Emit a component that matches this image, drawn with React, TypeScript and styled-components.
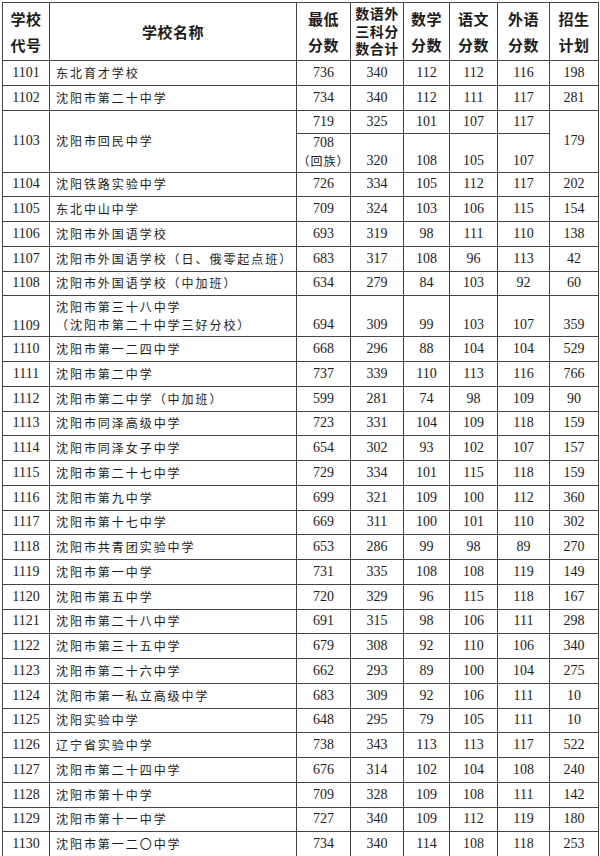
import styled, { createGlobalStyle } from "styled-components";

interface School {
	code: string;
	name: string[];
	min: string;
	total: string;
	math: string;
	chinese: string;
	english: string;
	plan: string;
}

const GlobalStyle = createGlobalStyle`
	html, body {
		margin: 0;
		padding: 0;
		background: #fff;
	}
`;

const Page = styled.div`
	padding: 2px 0 0 2px;
	width: 600px;
	height: 856px;
	overflow: hidden;
	box-sizing: border-box;
`;

const Table = styled.table`
	border-collapse: collapse;
	table-layout: fixed;
	width: 596px;
	color: #1c1c1c;
	font-family: "Liberation Serif", "Noto Sans CJK SC", serif;
	font-size: 14px;

	td, th {
		border: 1px solid #454545;
		padding: 0;
		overflow: hidden;
		white-space: nowrap;
	}
`;

const HeadRow = styled.tr`
	height: 58px;
`;

const Row = styled.tr<{ $h?: number }>`
	height: ${(p) => p.$h ?? 24.75}px;
`;

const Head = styled.th<{ $lines?: number }>`
	font-family: "Noto Sans CJK SC", sans-serif;
	font-weight: 700;
	font-size: ${(p) => ((p.$lines ?? 2) > 2 ? 14 : 15)}px;
	line-height: ${(p) => ((p.$lines ?? 2) > 2 ? 17.5 : 26)}px;
	text-align: center;
	vertical-align: middle;
	letter-spacing: 0.5px;
`;

const HeadLine = styled.span`
	display: block;
`;

const Code = styled.td<{ $bottom?: boolean }>`
	text-align: center;
	vertical-align: ${(p) => (p.$bottom ? "bottom" : "middle")};
	padding-bottom: ${(p) => (p.$bottom ? "2px" : "0")} !important;
`;

const Name = styled.td`
	font-family: "Noto Sans CJK SC", sans-serif;
	font-size: 12px;
	letter-spacing: 1.95px;
	line-height: 18px;
	padding-left: 6px !important;
	text-align: left;
	vertical-align: middle;
`;

const Num = styled.td<{ $bottom?: boolean }>`
	text-align: center;
	line-height: 18px;
	vertical-align: ${(p) => (p.$bottom ? "bottom" : "middle")};
	padding-bottom: ${(p) => (p.$bottom ? "2px" : "0")} !important;
`;

const Note = styled.span`
	display: block;
	font-family: "Noto Sans CJK SC", sans-serif;
	font-size: 12px;
	letter-spacing: 1px;
`;

const schools: School[] = [
	{ code: "1101", name: ["东北育才学校"], min: "736", total: "340", math: "112", chinese: "112", english: "116", plan: "198" },
	{ code: "1102", name: ["沈阳市第二十中学"], min: "734", total: "340", math: "112", chinese: "111", english: "117", plan: "281" },
	{ code: "1104", name: ["沈阳铁路实验中学"], min: "726", total: "334", math: "105", chinese: "112", english: "117", plan: "202" },
	{ code: "1105", name: ["东北中山中学"], min: "709", total: "324", math: "103", chinese: "106", english: "115", plan: "154" },
	{ code: "1106", name: ["沈阳市外国语学校"], min: "693", total: "319", math: "98", chinese: "111", english: "110", plan: "138" },
	{ code: "1107", name: ["沈阳市外国语学校（日、俄零起点班）"], min: "683", total: "317", math: "108", chinese: "96", english: "113", plan: "42" },
	{ code: "1108", name: ["沈阳市外国语学校（中加班）"], min: "634", total: "279", math: "84", chinese: "103", english: "92", plan: "60" },
	{ code: "1109", name: ["沈阳市第三十八中学", "（沈阳市第二十中学三好分校）"], min: "694", total: "309", math: "99", chinese: "103", english: "107", plan: "359" },
	{ code: "1110", name: ["沈阳市第一二四中学"], min: "668", total: "296", math: "88", chinese: "104", english: "104", plan: "529" },
	{ code: "1111", name: ["沈阳市第二中学"], min: "737", total: "339", math: "110", chinese: "113", english: "116", plan: "766" },
	{ code: "1112", name: ["沈阳市第二中学（中加班）"], min: "599", total: "281", math: "74", chinese: "98", english: "109", plan: "90" },
	{ code: "1113", name: ["沈阳市同泽高级中学"], min: "723", total: "331", math: "104", chinese: "109", english: "118", plan: "159" },
	{ code: "1114", name: ["沈阳市同泽女子中学"], min: "654", total: "302", math: "93", chinese: "102", english: "107", plan: "157" },
	{ code: "1115", name: ["沈阳市第二十七中学"], min: "729", total: "334", math: "101", chinese: "115", english: "118", plan: "159" },
	{ code: "1116", name: ["沈阳市第九中学"], min: "699", total: "321", math: "109", chinese: "100", english: "112", plan: "360" },
	{ code: "1117", name: ["沈阳市第十七中学"], min: "669", total: "311", math: "100", chinese: "101", english: "110", plan: "302" },
	{ code: "1118", name: ["沈阳市共青团实验中学"], min: "653", total: "286", math: "99", chinese: "98", english: "89", plan: "270" },
	{ code: "1119", name: ["沈阳市第一中学"], min: "731", total: "335", math: "108", chinese: "108", english: "119", plan: "149" },
	{ code: "1120", name: ["沈阳市第五中学"], min: "720", total: "329", math: "96", chinese: "115", english: "118", plan: "167" },
	{ code: "1121", name: ["沈阳市第二十八中学"], min: "691", total: "315", math: "98", chinese: "106", english: "111", plan: "298" },
	{ code: "1122", name: ["沈阳市第三十五中学"], min: "679", total: "308", math: "92", chinese: "110", english: "106", plan: "340" },
	{ code: "1123", name: ["沈阳市第二十六中学"], min: "662", total: "293", math: "89", chinese: "100", english: "104", plan: "275" },
	{ code: "1124", name: ["沈阳市第一私立高级中学"], min: "683", total: "309", math: "92", chinese: "106", english: "111", plan: "10" },
	{ code: "1125", name: ["沈阳实验中学"], min: "648", total: "295", math: "79", chinese: "105", english: "111", plan: "10" },
	{ code: "1126", name: ["辽宁省实验中学"], min: "738", total: "343", math: "113", chinese: "113", english: "117", plan: "522" },
	{ code: "1127", name: ["沈阳市第二十四中学"], min: "676", total: "314", math: "102", chinese: "104", english: "108", plan: "240" },
	{ code: "1128", name: ["沈阳市第十中学"], min: "709", total: "328", math: "109", chinese: "108", english: "111", plan: "142" },
	{ code: "1129", name: ["沈阳市第十一中学"], min: "727", total: "340", math: "109", chinese: "112", english: "119", plan: "180" },
	{ code: "1130", name: ["沈阳市第一二〇中学"], min: "734", total: "340", math: "114", chinese: "108", english: "118", plan: "253" },
];

const headers: string[][] = [
	["学校", "代号"],
	["学校名称"],
	["最低", "分数"],
	["数语外", "三科分", "数合计"],
	["数学", "分数"],
	["语文", "分数"],
	["外语", "分数"],
	["招生", "计划"],
];

function SchoolRow({ s }: { s: School }) {
	const tall = s.name.length > 1;
	return (
		<Row $h={tall ? 41 : undefined}>
			<Code $bottom={tall}>{s.code}</Code>
			<Name>
				{s.name.map((line) => (
					<div key={line}>{line}</div>
				))}
			</Name>
			<Num $bottom={tall}>{s.min}</Num>
			<Num $bottom={tall}>{s.total}</Num>
			<Num $bottom={tall}>{s.math}</Num>
			<Num $bottom={tall}>{s.chinese}</Num>
			<Num $bottom={tall}>{s.english}</Num>
			<Num $bottom={tall}>{s.plan}</Num>
		</Row>
	);
}

export default function App() {
	return (
		<Page>
			<GlobalStyle />
			<Table>
				<colgroup>
					<col style={{ width: 47 }} />
					<col style={{ width: 247 }} />
					<col style={{ width: 54 }} />
					<col style={{ width: 53 }} />
					<col style={{ width: 46 }} />
					<col style={{ width: 48 }} />
					<col style={{ width: 52 }} />
					<col style={{ width: 49 }} />
				</colgroup>
				<thead>
					<HeadRow>
						{headers.map((h) => (
							<Head key={h.join("")} $lines={h.length}>
								{h.map((line) => (
									<HeadLine key={line}>{line}</HeadLine>
								))}
							</Head>
						))}
					</HeadRow>
				</thead>
				<tbody>
					{schools.slice(0, 2).map((s) => (
						<SchoolRow key={s.code} s={s} />
					))}
					<Row $h={23}>
						<Code rowSpan={2}>1103</Code>
						<Name rowSpan={2}>沈阳市回民中学</Name>
						<Num>719</Num>
						<Num>325</Num>
						<Num>101</Num>
						<Num>107</Num>
						<Num>117</Num>
						<Num rowSpan={2}>179</Num>
					</Row>
					<Row $h={39}>
						<Num $bottom>
							708
							<Note>（回族）</Note>
						</Num>
						<Num $bottom>320</Num>
						<Num $bottom>108</Num>
						<Num $bottom>105</Num>
						<Num $bottom>107</Num>
					</Row>
					{schools.slice(2).map((s) => (
						<SchoolRow key={s.code} s={s} />
					))}
				</tbody>
			</Table>
		</Page>
	);
}
